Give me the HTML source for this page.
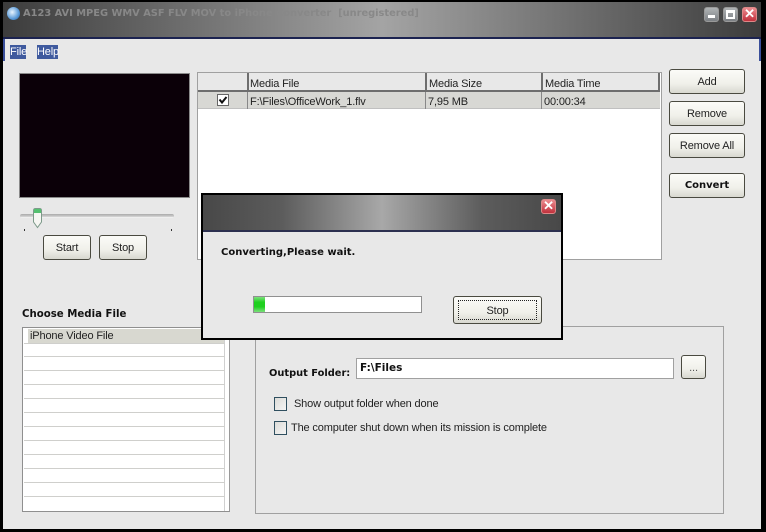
<!DOCTYPE html>
<html><head><meta charset="utf-8">
<style>
html,body{margin:0;padding:0;background:#000}
#w{position:relative;width:766px;height:532px;overflow:hidden;background:#e8e8e8;font-family:"Liberation Sans",sans-serif;font-size:11px;letter-spacing:-.15px;color:#222}
#w div,#w span.a{position:absolute;box-sizing:border-box;white-space:nowrap}
.btn{background:linear-gradient(#fbfbf8,#f0f0ea 60%,#d8d8d0);border:1px solid #4a4a40;border-radius:3px;text-align:center;line-height:24px;height:25px;color:#222}
.b{font-family:"DejaVu Sans",sans-serif;font-weight:bold;font-size:10px;letter-spacing:0;color:#111}
.t{line-height:16px}
.cb{width:13px;height:14px;border:1px solid #2f4f5f;background:linear-gradient(135deg,#dcdcd8,#f4f4f4)}
.rl{left:24px;width:201px;height:1px;background:#cfcfcc}
.wb{width:15px;height:15px;border-radius:3px;border:1px solid #999}
</style></head><body><div id="w">
<!-- outer frame -->
<div style="left:0;top:0;width:766px;height:2px;background:#000"></div>
<div style="left:0;top:0;width:3px;height:532px;background:#000"></div>
<div style="left:761px;top:0;width:5px;height:532px;background:#000"></div>
<div style="left:0;top:529px;width:766px;height:3px;background:#000"></div>
<!-- title bar -->
<div style="left:3px;top:2px;width:758px;height:36px;background:linear-gradient(90deg,#3c3c3c 0,#a4a4a4 50%,#3c3c3c 100%)"></div>
<div style="left:3px;top:37px;width:758px;height:2px;background:#1c2350"></div>
<div style="left:3px;top:39px;width:2px;height:22px;background:#3a4f9a"></div>
<div style="left:759px;top:39px;width:2px;height:22px;background:#3a4f9a"></div>
<div style="left:7px;top:7px;width:13px;height:13px;border-radius:50%;background:radial-gradient(circle at 40% 40%,#e8f4ff,#5a9ad8 60%,#27558c)"></div>
<div class="b" style="left:23px;top:7px;font-size:9.85px;line-height:14px;color:#888">A123 AVI MPEG WMV ASF FLV MOV to iPhone Converter&nbsp; [unregistered]</div>
<!-- window buttons -->
<div class="wb" style="left:704px;top:7px;background:linear-gradient(#b0b4b6,#7c8084)"><div style="left:3px;top:7px;width:7px;height:3px;background:#fff"></div></div>
<div class="wb" style="left:723px;top:7px;background:linear-gradient(#b0b4b6,#7c8084)"><div style="left:2px;top:2px;width:9px;height:9px;border:2px solid #fff;border-top-width:3px"></div></div>
<div class="wb" style="left:742px;top:7px;background:linear-gradient(#ec8c90,#c0303c);border-color:#d88;color:#fff;font-weight:bold;font-size:13px;line-height:12px;text-align:center">✕</div>
<!-- menu -->
<div style="left:10px;top:45px;width:16px;height:14px;background:#3f5a9e;color:#fff;line-height:14px;text-align:center">File</div>
<div style="left:37px;top:45px;width:21px;height:14px;background:#3f5a9e;color:#fff;line-height:14px;text-align:center">Help</div>
<!-- video -->
<div style="left:19px;top:73px;width:171px;height:125px;background:#0b0008;border:1px solid #8a8a8a"></div>
<!-- slider -->
<div style="left:20px;top:214px;width:154px;height:4px;background:linear-gradient(#aaa,#ccc 60%,#fff);border-radius:2px"></div>
<div style="left:24px;top:229px;width:1px;height:2px;background:#333"></div>
<div style="left:171px;top:229px;width:1px;height:2px;background:#333"></div>
<svg style="position:absolute;left:32px;top:208px" width="11" height="21"><path d="M1.500 2.500Q1.500 .5 3.500 .5H7.500Q9.500 .5 9.500 2.500V14L5.500 19.500 1.500 14Z" fill="#f6f6f2" stroke="#7d9a8a"/><rect x="2" y="1" width="7" height="4" fill="#55c070"/></svg>
<div class="btn" style="left:43px;top:235px;width:48px">Start</div>
<div class="btn" style="left:99px;top:235px;width:48px">Stop</div>
<!-- list view -->
<div style="left:197px;top:72px;width:465px;height:188px;background:#fff;border:1px solid #a0a0a0"></div>
<div style="left:198px;top:73px;width:462px;height:19px;background:#e8e8e8;border-bottom:2px solid #6e6e6e;border-right:2px solid #6e6e6e"></div>
<div style="left:198px;top:92px;width:462px;height:17px;background:#d8d8d4;border-bottom:1px solid #c0c0c0"></div>
<div style="left:247px;top:73px;width:2px;height:19px;background:#6e6e6e"></div>
<div style="left:425px;top:73px;width:2px;height:19px;background:#6e6e6e"></div>
<div style="left:541px;top:73px;width:2px;height:19px;background:#6e6e6e"></div>
<div style="left:247px;top:92px;width:1px;height:17px;background:#888"></div>
<div style="left:425px;top:92px;width:1px;height:17px;background:#888"></div>
<div style="left:541px;top:92px;width:1px;height:17px;background:#888"></div>
<div class="t" style="left:250px;top:76px">Media File</div>
<div class="t" style="left:429px;top:76px">Media Size</div>
<div class="t" style="left:545px;top:76px">Media Time</div>
<div style="left:217px;top:94px;width:12px;height:12px;background:#fff;border:1px solid #666"></div>
<svg style="position:absolute;left:217px;top:94px" width="12" height="12"><path d="M2.500 5.500L5 8.500 9.500 3" fill="none" stroke="#111" stroke-width="2"/></svg>
<div class="t" style="left:250px;top:94px">F:\Files\OfficeWork_1.flv</div>
<div class="t" style="left:428px;top:94px">7,95 MB</div>
<div class="t" style="left:544px;top:94px">00:00:34</div>
<!-- right buttons -->
<div class="btn" style="left:669px;top:69px;width:76px">Add</div>
<div class="btn" style="left:669px;top:101px;width:76px">Remove</div>
<div class="btn" style="left:669px;top:133px;width:76px">Remove All</div>
<div class="btn b" style="left:669px;top:173px;width:76px;line-height:24px">Convert</div>
<!-- choose media -->
<div class="b" style="left:22px;top:307px;font-size:10.2px;line-height:15px">Choose Media File</div>
<div style="left:22px;top:327px;width:208px;height:185px;background:#fff;border:1px solid #8f8f8f;border-right-color:#999"></div>
<div style="left:28px;top:329px;width:197px;height:14px;background:#d8d8d0"></div>
<div class="t" style="left:30px;top:328px">iPhone Video File</div>
<div style="left:224px;top:328px;width:1px;height:183px;background:#d0d0d0"></div>
<div class="rl" style="top:343px"></div><div class="rl" style="top:356px"></div><div class="rl" style="top:370px"></div><div class="rl" style="top:384px"></div><div class="rl" style="top:398px"></div><div class="rl" style="top:412px"></div><div class="rl" style="top:426px"></div><div class="rl" style="top:440px"></div><div class="rl" style="top:454px"></div><div class="rl" style="top:468px"></div><div class="rl" style="top:482px"></div><div class="rl" style="top:496px"></div>
<!-- group -->
<div style="left:255px;top:326px;width:469px;height:188px;border:1px solid #a0a0a0"></div>
<div class="b" style="left:269px;top:366px;font-size:9.85px;line-height:15px">Output Folder:</div>
<div class="b" style="left:356px;top:358px;width:318px;height:21px;background:#fff;border:1px solid #a0a0a0;padding-left:3px;line-height:18px;font-size:10.5px">F:\Files</div>
<div class="btn" style="left:681px;top:355px;width:25px;height:24px;line-height:24px;color:#555">...</div>
<div class="cb" style="left:274px;top:397px"></div>
<div class="t" style="left:294px;top:396px">Show output folder when done</div>
<div class="cb" style="left:274px;top:421px"></div>
<div class="t" style="left:291px;top:420px">The computer shut down when its mission is complete</div>
<!-- dialog -->
<div style="left:201px;top:193px;width:362px;height:147px;background:#e8e8e8;border:2px solid #000"></div>
<div style="left:203px;top:195px;width:358px;height:36px;background:linear-gradient(90deg,#484848 0,#5c5c5c 22%,#a8a8a8 50%,#5c5c5c 78%,#484848 100%)"></div>
<div style="left:203px;top:230px;width:358px;height:2px;background:#2c3050"></div>
<div class="wb" style="left:541px;top:199px;background:linear-gradient(#ec8c90,#c0303c);border-color:#d88;color:#fff;font-weight:bold;font-size:13px;line-height:12px;text-align:center">✕</div>
<div class="b" style="left:221px;top:246px;line-height:14px;color:#111">Converting,Please wait.</div>
<div style="left:253px;top:296px;width:169px;height:17px;background:#fff;border:1px solid #909090"></div>
<div style="left:254px;top:297px;width:11px;height:15px;background:linear-gradient(#7ce07c,#1fd01f 35%,#1fd01f 65%,#7ce07c)"></div>
<div class="btn" style="left:453px;top:296px;width:89px;height:28px;line-height:28px">Stop</div>
<div style="left:458px;top:300px;width:79px;height:20px;border:1px dotted #222"></div>
</div></body></html>
